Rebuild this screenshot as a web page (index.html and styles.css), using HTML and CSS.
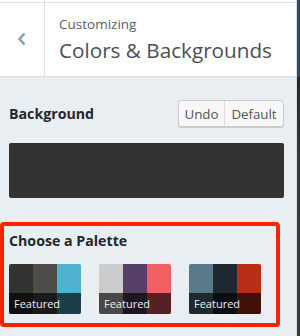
FILE: index.html
```html
<!DOCTYPE html>
<html lang="en">
<head>
  <meta charset="UTF-8" />
  <meta name="viewport" content="width=device-width, initial-scale=1.0"/>
  <title>Colors &amp; Backgrounds</title>
  <link rel="stylesheet" href="styles.css">
</head>
<body>
  <div class="layout">
    <div class="panel">
      <div class="header">
        <div class="back">
          <svg width="10" height="14" viewBox="0 0 10 14">
            <polyline points="7.5,1.5 2.5,7 7.5,12.5" fill="none" stroke="#7fa1bd" stroke-width="2.6"/>
          </svg>
        </div>
        <div class="titles">
          <span class="sub">Customizing</span>
          <h1>Colors &amp; Backgrounds</h1>
        </div>
      </div>

      <div class="section">
        <div class="row">
          <h2>Background</h2>
          <div class="btn-group">
            <button class="undo">Undo</button>
            <button class="default">Default</button>
          </div>
        </div>
        <div class="swatch"></div>
      </div>

      <div class="palette-box">
        <h2>Choose a Palette</h2>
        <div class="palettes">
          <div class="palette">
            <span style="background:#333331"></span>
            <span style="background:#4e4d49"></span>
            <span style="background:#4fb1cf"></span>
            <div class="label">Featured</div>
          </div>
          <div class="palette">
            <span style="background:#cccccc"></span>
            <span style="background:#573f68"></span>
            <span style="background:#f25f61"></span>
            <div class="label">Featured</div>
          </div>
          <div class="palette">
            <span style="background:#5a7a8a"></span>
            <span style="background:#1f2a30"></span>
            <span style="background:#b92e17"></span>
            <div class="label">Featured</div>
          </div>
        </div>
      </div>
    </div>
    <div class="edge"></div>
  </div>
</body>
</html>
```

FILE: styles.css
```css
* {
  box-sizing: border-box;
}

body {
  margin: 0;
  font-family: 'Open Sans', 'Noto Sans', sans-serif;
  background: #e9eef2;
  color: #23282d;
}

.layout {
  display: flex;
  height: 336px;
}

.panel {
  width: 297px;
  border-right: 1px solid #dadfe3;
  background: #e9eef2;
}

.edge {
  flex: 1;
  background: linear-gradient(to bottom, #2c4a63 0, #2c4a63 77px, #262626 77px, #383838 160px, #3a3a3a 100%);
}

.header {
  display: flex;
  height: 77px;
  background: linear-gradient(to bottom, #fff 0, #fff 2px, #dde2e6 2px, #dde2e6 3px, #fff 3px);
  border-bottom: 1px solid #d8dde2;
}

.back {
  width: 45px;
  border-right: 1px solid #dde2e6;
  display: flex;
  align-items: center;
  justify-content: center;
  padding-top: 1px;
}

.titles {
  padding: 15px 0 0 14px;
  display: flex;
  flex-direction: column;
  gap: 3px;
}

.sub {
  font-size: 13.5px;
  line-height: 18px;
  color: #555d66;
}

h1 {
  margin: 0;
  font-size: 20.7px;
  line-height: 28px;
  font-weight: 400;
  color: #4a4f55;
}

.section {
  padding: 23px 12px 0 9px;
}

.row {
  display: flex;
  justify-content: space-between;
  align-items: center;
  height: 27px;
}

h2 {
  margin: 0;
  font-size: 14.2px;
  line-height: 20px;
  font-weight: 700;
  color: #23282d;
}

.btn-group {
  display: flex;
  background: #f7f7f7;
  border: 1px solid #cccccc;
  border-radius: 3px;
  box-shadow: 0 1px 0 #cccccc;
  height: 27px;
}

.btn-group button {
  font-family: inherit;
  font-size: 13.3px;
  color: #555555;
  background: none;
  border: none;
  padding: 0;
  height: 25px;
}

.btn-group .undo {
  width: 46px;
  border-right: 1px solid #dddddd;
}

.btn-group .default {
  width: 58px;
}

.swatch {
  margin-top: 16px;
  height: 55px;
  background: #353331;
  border-radius: 2px;
}

.palette-box {
  margin-top: 24px;
  width: 280px;
  border: 4px solid #ff2200;
  border-radius: 4px;
  padding: 5px 0 9px 5px;
}

.palettes {
  display: flex;
  gap: 18px;
  margin-top: 13px;
}

.palette {
  position: relative;
  display: flex;
  width: 72px;
  height: 50px;
  border-radius: 2px;
  overflow: hidden;
}

.palette span {
  flex: 1;
}

.palette .label {
  position: absolute;
  left: 0;
  right: 0;
  bottom: 0;
  height: 21px;
  background: rgba(0, 0, 0, 0.65);
  color: #eeeeee;
  font-size: 11px;
  line-height: 21px;
  padding-left: 5px;
}
```
